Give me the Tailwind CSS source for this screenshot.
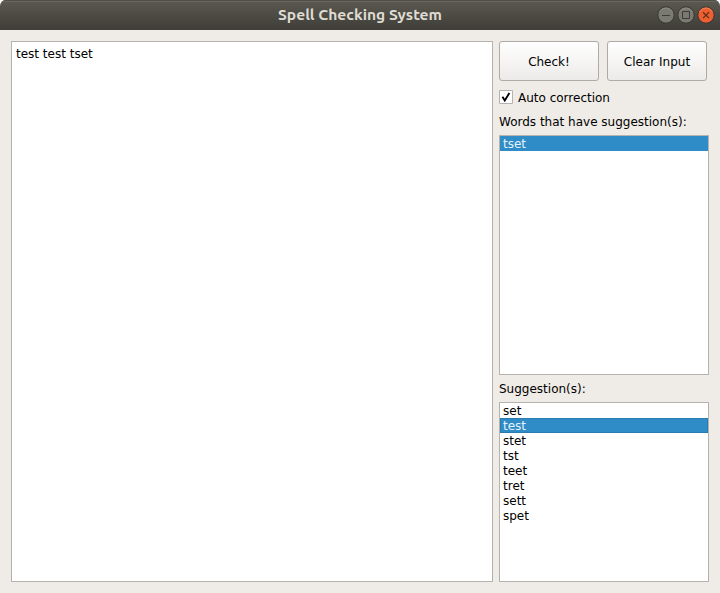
<!DOCTYPE html>
<html lang="en">
<head>
<meta charset="utf-8">
<title>Spell Checking System</title>
<script src="https://cdn.jsdelivr.net/npm/@tailwindcss/browser@4"></script>
</head>
<body class="bg-white">
<div class="w-[720px] h-[593px] flex flex-col overflow-hidden rounded-t-[6px] bg-[#efebe7] font-['DejaVu_Sans',sans-serif] text-[12px] leading-[15px] text-black">
  <header class="h-[30px] shrink-0 grid grid-cols-[1fr_auto_1fr] items-center bg-linear-to-b from-[#5c5a50] to-[#3e3d38] shadow-[inset_0_1px_0_#504e46,inset_0_2px_0_#6a685e]">
    <span></span>
    <h1 class="font-['Ubuntu','Noto_Sans',sans-serif] font-bold text-[14px]"><svg class="block" width="164" height="20" viewBox="0 0 164 20"><text x="0" y="15" textLength="164" lengthAdjust="spacingAndGlyphs" fill="#dfdbd2">Spell Checking System</text></svg></h1>
    <div class="flex justify-end gap-[2px] pr-[5px]">
      <svg width="18" height="18" viewBox="0 0 18 18"><circle cx="9" cy="9" r="8.2" fill="#7b7a72" stroke="#383732"/><path d="M2.5 6a7.3 7.3 0 0 1 13 0" fill="none" stroke="#929188" stroke-width=".7"/><path d="M5 9.5h8" stroke="#3c3b37"/></svg>
      <svg width="18" height="18" viewBox="0 0 18 18"><circle cx="9" cy="9" r="8.2" fill="#7b7a72" stroke="#383732"/><path d="M2.5 6a7.3 7.3 0 0 1 13 0" fill="none" stroke="#929188" stroke-width=".7"/><path d="M5.5 5.5h7v7h-7z" fill="none" stroke="#3c3b37"/></svg>
      <svg width="18" height="18" viewBox="0 0 18 18"><circle cx="9" cy="9" r="8.2" fill="#ed5e31" stroke="#383732"/><path d="M2.5 6a7.3 7.3 0 0 1 13 0" fill="none" stroke="#f78b66" stroke-width=".7"/><path d="M6 6.3l6 5.8m0-5.8l-6 5.8" stroke="#5a2f1c" stroke-width="1.2"/></svg>
    </div>
  </header>
  <main class="flex-1 flex gap-[6px] pt-[11px] pb-[11px] px-[11px]">
    <div class="w-[482px] border border-[#b6b3af] bg-white px-1 pt-[5px]">test test tset</div>
    <section class="w-[210px] flex flex-col">
      <div class="flex gap-2 h-10">
        <button class="w-[100px] h-10 rounded-[3px] border border-[#aeaaa6] bg-linear-to-b from-white to-[#edebe9] pt-[3px]">Check!</button>
        <button class="w-[100px] h-10 rounded-[3px] border border-[#aeaaa6] bg-linear-to-b from-white to-[#edebe9] pt-[3px]">Clear Input</button>
      </div>
      <label class="flex items-center gap-[5px] mt-[9px] h-[14px]">
        <svg width="14" height="14" viewBox="0 0 14 14"><path d="M.5.5h13v13H.5z" fill="#fff" stroke="#b6b3af"/><path d="M3.4 6.8l2.4 3.7L10.4 3" fill="none" stroke="#000" stroke-width="1.9"/></svg>
        <span class="pt-[2px]">Auto correction</span>
      </label>
      <div class="mt-[10px] pt-px h-[21px] whitespace-nowrap">Words that have suggestion(s):</div>
      <ul class="h-[240px] border border-[#b6b3af] bg-white">
        <li class="h-[15px] pt-px pl-[3px] bg-[#308cc6] text-[#e4f2fa]">tset</li>
      </ul>
      <div class="mt-[6px] pt-px h-[21px]">Suggestion(s):</div>
      <ul class="h-[180px] border border-[#b6b3af] bg-white">
        <li class="h-[15px] pt-px pl-[3px]">set</li>
        <li class="h-[15px] pt-px pl-[3px] bg-[#308cc6] text-[#e4f2fa] shadow-[inset_0_0_0_1px_#2a7bae]">test</li>
        <li class="h-[15px] pt-px pl-[3px]">stet</li>
        <li class="h-[15px] pt-px pl-[3px]">tst</li>
        <li class="h-[15px] pt-px pl-[3px]">teet</li>
        <li class="h-[15px] pt-px pl-[3px]">tret</li>
        <li class="h-[15px] pt-px pl-[3px]">sett</li>
        <li class="h-[15px] pt-px pl-[3px]">spet</li>
      </ul>
    </section>
  </main>
</div>
</body>
</html>
